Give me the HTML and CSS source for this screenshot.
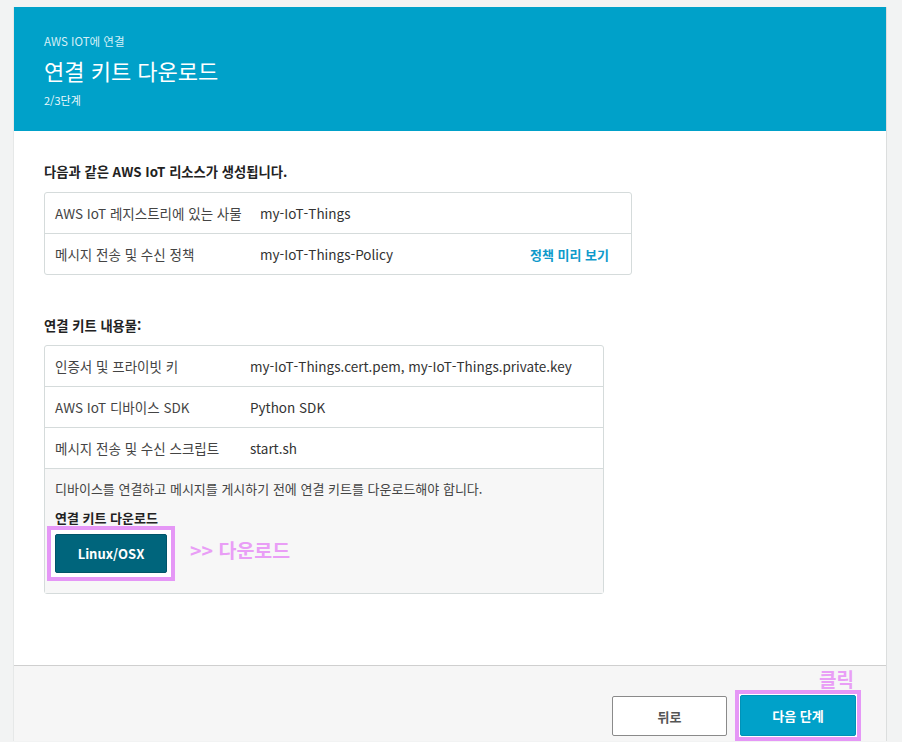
FILE: index.html
```html
<!DOCTYPE html>
<html lang="ko">
<head>
<meta charset="utf-8">
<title>연결 키트 다운로드</title>
<link rel="stylesheet" href="styles.css">
</head>
<body>
<div class="page">
  <div class="card">
    <header class="hero">
      <div class="crumb">AWS IOT에 연결</div>
      <h1 class="title">연결 키트 다운로드</h1>
      <div class="step">2/3단계</div>
    </header>
    <main class="content">
      <h2 class="section-title">다음과 같은 AWS IoT 리소스가 생성됩니다.</h2>
      <div class="table t1">
        <div class="row">
          <div class="key">AWS IoT 레지스트리에 있는 사물</div>
          <div class="val">my-IoT-Things</div>
        </div>
        <div class="row">
          <div class="key">메시지 전송 및 수신 정책</div>
          <div class="val">my-IoT-Things-Policy</div>
          <a class="link">정책 미리 보기</a>
        </div>
      </div>

      <h2 class="section-title s2">연결 키트 내용물:</h2>
      <div class="table t2">
        <div class="row">
          <div class="key">인증서 및 프라이빗 키</div>
          <div class="val">my-IoT-Things.cert.pem, my-IoT-Things.private.key</div>
        </div>
        <div class="row">
          <div class="key">AWS IoT 디바이스 SDK</div>
          <div class="val">Python SDK</div>
        </div>
        <div class="row">
          <div class="key">메시지 전송 및 수신 스크립트</div>
          <div class="val">start.sh</div>
        </div>
        <div class="download">
          <p class="note">디바이스를 연결하고 메시지를 게시하기 전에 연결 키트를 다운로드해야 합니다.</p>
          <div class="dl-label">연결 키트 다운로드</div>
          <div class="dl-row">
            <div class="highlight hl-dl"><button class="btn btn-dark">Linux/OSX</button></div>
            <span class="annot annot-dl">&gt;&gt; 다운로드</span>
          </div>
        </div>
      </div>
    </main>
    <footer class="footer">
      <button class="btn btn-back">뒤로</button>
      <div class="highlight hl-next">
        <span class="annot annot-click">클릭</span>
        <button class="btn btn-next">다음 단계</button>
      </div>
    </footer>
  </div>
</div>
</body>
</html>
```

FILE: styles.css
```css
* { box-sizing: border-box; }
html, body { margin: 0; padding: 0; }
body {
  background: #f2f3f3;
  font-family: "Noto Sans CJK KR", "Noto Sans", sans-serif;
  color: #333;
  height: 742px;
  overflow: hidden;
}
.page {
  padding: 7px 16px 0 14px;
}
.card {
  width: 872px;
  background: #fff;
  box-shadow: 1px 0 0 #dcdede, -1px 0 0 #e6e8e8;
}
.hero {
  background: #00a1c9;
  height: 124px;
  padding: 25px 30px 0 30px;
  color: #fff;
}
.crumb {
  font-size: 11.5px;
  line-height: 18px;
  color: #d6f0f7;
}
.title {
  margin: 4px 0 0 0;
  font-size: 22px;
  font-weight: 400;
  line-height: 32px;
}
.step {
  margin-top: 5px;
  font-size: 11px;
  line-height: 18px;
  color: #eaf8fb;
}
.content {
  padding: 31px 30px 0 30px;
  height: 534px;
}
.section-title {
  margin: 0;
  font-size: 13.3px;
  font-weight: 700;
  line-height: 20px;
  color: #222;
}
.section-title.s2 { margin-top: 41px; }
.table {
  margin-top: 10px;
  border: 1px solid #d5dbdb;
  border-radius: 3px;
  font-size: 13.5px;
}
.t1 { width: 588px; }
.t2 { width: 560px; margin-top: 9px; }
.row {
  display: flex;
  align-items: center;
  height: 41px;
  border-top: 1px solid #d5dbdb;
}
.row:first-child { border-top: none; height: 40px; }
.key {
  padding-left: 10px;
  color: #444;
}
.t1 .key { width: 215px; }
.t2 .key { width: 205px; }
.val { color: #333; flex: 1; }
.link {
  color: #0e9acb;
  font-weight: 700;
  font-size: 13px;
  padding-right: 22px;
}
.download {
  background: #f7f7f7;
  border-top: 1px solid #d5dbdb;
  padding: 10px 11px 12px 10px;
}
.note {
  margin: 0;
  font-size: 13px;
  line-height: 20px;
  color: #444;
}
.dl-label {
  margin-top: 9px;
  font-size: 13px;
  font-weight: 700;
  line-height: 20px;
  color: #222;
}
.dl-row {
  display: flex;
  align-items: center;
  margin-top: -2px;
  margin-left: -8px;
}
.highlight {
  border: 4px solid #e597f6;
  background: #fff;
}
.hl-dl { padding: 4px; }
.btn {
  font-family: inherit;
  font-size: 13px;
  font-weight: 700;
  border-radius: 2px;
  display: block;
  cursor: pointer;
}
.btn-dark {
  width: 112px;
  height: 39px;
  background: #00657c;
  color: #fff;
  border: 1px solid #005469;
}
.annot {
  color: #e99ef6;
  font-weight: 700;
}
.annot-dl {
  margin-left: 15px;
  margin-bottom: 7px;
  font-size: 19.5px;
  line-height: 24px;
}
.footer {
  border-top: 1px solid #cfcfcf;
  background: #f6f6f6;
  height: 76px;
  overflow: hidden;
  display: flex;
  justify-content: flex-end;
  align-items: flex-start;
  padding: 0 25px 0 0;
}
.btn-back {
  margin-top: 30px;
  width: 115px;
  height: 40px;
  background: #fff;
  color: #555;
  border: 1px solid #8a8a8a;
}
.hl-next {
  position: relative;
  margin-top: 24px;
  margin-left: 8px;
  padding: 1px 1px;
}
.btn-next {
  width: 116px;
  height: 41px;
  background: #00a1c9;
  color: #fff;
  border: 1px solid #0092b8;
}
.annot-click {
  position: absolute;
  right: 3px;
  bottom: 100%;
  margin-bottom: 3px;
  font-size: 19px;
  line-height: 24px;
}
```
